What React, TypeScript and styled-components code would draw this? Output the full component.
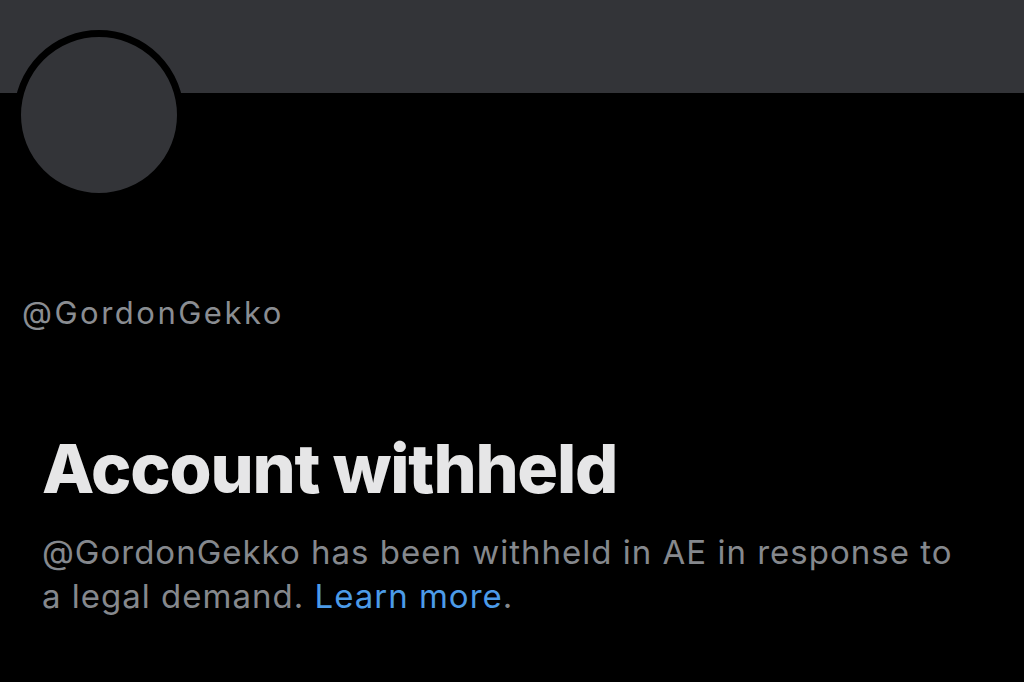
import React from "react";
import styled, { createGlobalStyle } from "styled-components";

const GlobalStyle = createGlobalStyle`
  html, body {
    margin: 0;
    padding: 0;
    background: #000;
  }
  body {
    font-family: "Inter", "Liberation Sans", sans-serif;
  }
`;

const App: React.FC = () => {
  return (
    <Page>
      <GlobalStyle />
      <Banner />
      <AvatarRow>
        <Avatar />
      </AvatarRow>
      <Handle>@GordonGekko</Handle>
      <Notice>
        <Title>Account withheld</Title>
        <Desc>
          @GordonGekko has been withheld in AE in response to a legal demand.{" "}
          <LearnMore href="#">Learn more</LearnMore>.
        </Desc>
      </Notice>
    </Page>
  );
};

export default App;

const Page = styled.div`
  width: 1024px;
  height: 682px;
  background: #000;
  overflow: hidden;
`;

const Banner = styled.div`
  height: 93px;
  background: #333438;
`;

const AvatarRow = styled.div`
  padding-left: 14px;
  margin-top: -63px;
`;

const Avatar = styled.div`
  width: 156px;
  height: 156px;
  border-radius: 50%;
  background: #333438;
  border: 7px solid #000;
`;

const Handle = styled.div`
  margin-top: 95px;
  padding-left: 22px;
  font-size: 31px;
  line-height: 36px;
  color: #8a8d92;
  letter-spacing: 2.5px;
`;

const Notice = styled.div`
  padding: 0 42px;
  margin-top: 97px;
`;

const Title = styled.h1`
  margin: 0;
  font-size: 68px;
  line-height: 80px;
  font-weight: 800;
  color: #e6e6e7;
  letter-spacing: -1.2px;
`;

const Desc = styled.p`
  margin: 22px 0 0;
  width: 940px;
  font-size: 33px;
  line-height: 44px;
  color: #85888d;
  letter-spacing: 1px;
`;

const LearnMore = styled.a`
  color: #4c9be8;
  text-decoration: none;
`;
